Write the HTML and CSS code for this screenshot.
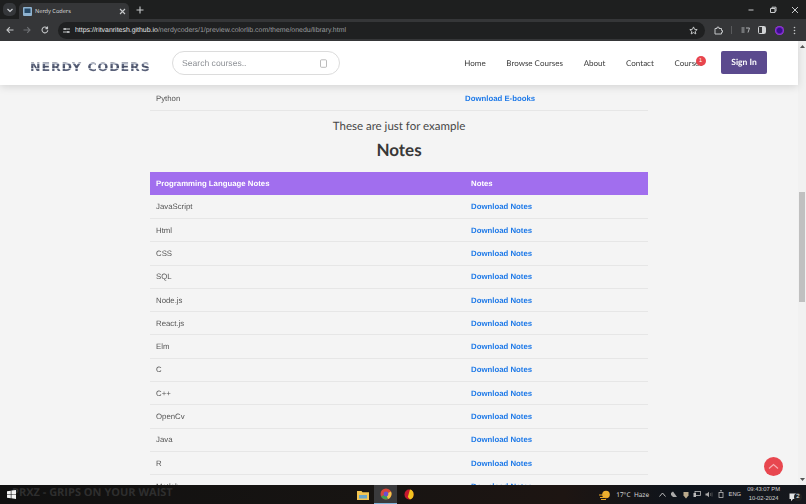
FILE: index.html
```html
<!DOCTYPE html>
<html lang="en">
<head>
<meta charset="utf-8">
<title>Nerdy Coders</title>
<link rel="stylesheet" href="styles.css">
</head>
<body>
<div class="screen">
  <div class="tabstrip">
    <div class="tab-menu"><svg width="8" height="8" viewBox="0 0 8 8"><path d="M1.500 3l2.500 2.500L6.500 3" fill="none" stroke="#cfd2d6" stroke-width="1.200"/></svg></div>
    <div class="tab">
      <svg class="favicon" width="9" height="9" viewBox="0 0 9 9"><rect width="9" height="9" rx="1" fill="#8fb3d0"/><rect x="1.500" y="1.500" width="6" height="4.500" fill="#274a68"/></svg>
      <span class="tab-title">Nerdy Coders</span>
      <svg class="tab-close" width="7" height="7" viewBox="0 0 7 7"><path d="M1 1l5 5M6 1L1 6" stroke="#c8cacc" stroke-width="1.100"/></svg>
    </div>
    <svg class="new-tab" width="8" height="8" viewBox="0 0 8 8"><path d="M4 .5v7M.5 4h7" stroke="#c8cacc" stroke-width="1.100"/></svg>
    <div class="window-controls">
      <svg width="8" height="8" viewBox="0 0 8 8"><path d="M1.500 4h5" stroke="#c8cacc"/></svg>
      <svg width="8" height="8" viewBox="0 0 8 8"><path d="M1.500 2.500h4.500v4h-4.500zM3 2.500V1.200h4v4H6" fill="none" stroke="#c8cacc"/></svg>
      <svg width="8" height="8" viewBox="0 0 8 8"><path d="M1 1l6 6M7 1L1 7" stroke="#c8cacc"/></svg>
    </div>
  </div>
  <div class="toolbar">
    <svg width="8" height="8" viewBox="0 0 8 8"><path d="M7.500 4H1M3.800 1.200L1 4l2.800 2.800" fill="none" stroke="#c4c6c8" stroke-width="1.100"/></svg>
    <svg class="nav-forward" width="8" height="8" viewBox="0 0 8 8"><path d="M.5 4H7M4.200 1.200L7 4 4.200 6.800" fill="none" stroke="#6f7174" stroke-width="1.100"/></svg>
    <svg class="nav-reload" width="8" height="8" viewBox="0 0 8 8"><path d="M6.800 4.200A2.900 2.900 0 1 1 5.900 1.800M6.500.6v2H4.500" fill="none" stroke="#c4c6c8" stroke-width="1.100"/></svg>
    <div class="omnibox">
      <span class="site-badge"><svg width="7" height="7" viewBox="0 0 7 7"><path d="M0 2h7M0 5h7" stroke="#c4c6c8"/><circle cx="2" cy="2" r="1" fill="#c4c6c8"/><circle cx="5" cy="5" r="1" fill="#c4c6c8"/></svg></span>
      <span class="url"><span class="url-host">https://ritvanritesh.github.io</span>/nerdycoders/1/preview.colorlib.com/theme/onedu/library.html</span>
      <svg class="star" width="9" height="9" viewBox="0 0 10 10"><path d="M5 1l1.200 2.700 2.900.3-2.200 1.900.7 2.900L5 7.300 2.400 8.800l.7-2.900L.9 4l2.900-.3z" fill="none" stroke="#d0d2d4"/></svg>
    </div>
    <div class="toolbar-icons">
      <svg width="9" height="9" viewBox="0 0 9 9"><path d="M1 2.500h2V1.200h2v1.300h2.500V4.500H8.500v1.800H7.500V8H1z" fill="none" stroke="#c4c6c8"/></svg>
      <span class="toolbar-sep"></span>
      <svg width="9" height="7" viewBox="0 0 9 7"><path d="M.5 1h3M.5 3h3M.5 5h3M5 1h3.500L7 5.500" fill="none" stroke="#b0b2b4"/></svg>
      <svg width="8" height="8" viewBox="0 0 8 8"><rect x=".5" y=".5" width="7" height="7" rx="1" fill="none" stroke="#d0d2d4"/><rect x="4" y="1" width="3" height="6" fill="#d0d2d4"/></svg>
      <span class="avatar"></span>
      <svg class="chrome-menu" width="3" height="9" viewBox="0 0 3 9"><circle cx="1.500" cy="1.500" r=".8" fill="#c4c6c8"/><circle cx="1.500" cy="4.500" r=".8" fill="#c4c6c8"/><circle cx="1.500" cy="7.500" r=".8" fill="#c4c6c8"/></svg>
    </div>
  </div>
  <div class="viewport">
    <header class="site-header">
      <div class="logo-box"><a class="logo">NERDY CODERS</a></div>
      <div class="search">
        <span class="search-text">Search courses..</span>
        <svg width="7" height="9" viewBox="0 0 7 9"><rect x=".5" y=".8" width="6" height="7.500" rx="1" fill="none" stroke="#aaa" stroke-width=".8"/></svg>
      </div>
      <nav class="site-nav">
        <a class="nav-link">Home</a>
        <a class="nav-link">Browse Courses</a>
        <a class="nav-link">About</a>
        <a class="nav-link">Contact</a>
        <a class="nav-link nav-courses">Courses<span class="badge">1</span></a>
      </nav>
      <a class="signin">Sign In</a>
    </header>
    <main class="content">
      <table class="table table-first">
        <tr><td class="col-a-first">Python</td><td><a class="dl">Download E-books</a></td></tr>
      </table>
      <p class="sub">These are just for example</p>
      <h2 class="title">Notes</h2>
      <table class="table">
        <tr class="head"><th class="col-a">Programming Language Notes</th><th>Notes</th></tr>
        <tr><td>JavaScript</td><td><a class="dl">Download Notes</a></td></tr>
        <tr><td>Html</td><td><a class="dl">Download Notes</a></td></tr>
        <tr><td>CSS</td><td><a class="dl">Download Notes</a></td></tr>
        <tr><td>SQL</td><td><a class="dl">Download Notes</a></td></tr>
        <tr><td>Node.js</td><td><a class="dl">Download Notes</a></td></tr>
        <tr><td>React.js</td><td><a class="dl">Download Notes</a></td></tr>
        <tr><td>Elm</td><td><a class="dl">Download Notes</a></td></tr>
        <tr><td>C</td><td><a class="dl">Download Notes</a></td></tr>
        <tr><td>C++</td><td><a class="dl">Download Notes</a></td></tr>
        <tr><td>OpenCv</td><td><a class="dl">Download Notes</a></td></tr>
        <tr><td>Java</td><td><a class="dl">Download Notes</a></td></tr>
        <tr><td>R</td><td><a class="dl">Download Notes</a></td></tr>
        <tr><td>Matlab</td><td><a class="dl">Download Notes</a></td></tr>
      </table>
    </main>
    <div class="scrollbar">
      <svg class="scroll-up" width="5" height="3" viewBox="0 0 5 3"><path d="M2.500 0L5 3H0z" fill="#555"/></svg>
      <span class="scroll-thumb"></span>
      <svg class="scroll-down" width="5" height="3" viewBox="0 0 5 3"><path d="M2.500 3L5 0H0z" fill="#555"/></svg>
    </div>
    <span class="to-top"><svg width="11" height="7" viewBox="0 0 11 7"><path d="M1 5.500l4.500-4 4.500 4" fill="none" stroke="#f7b0b4" stroke-width="1.200"/></svg></span>
  </div>
  <footer class="taskbar">
    <span class="wallpaper-text">PRXZ - GRIPS ON YOUR WAIST</span>
    <svg class="win-logo" width="9" height="9" viewBox="0 0 9 9"><path d="M0 1.300l3.800-.6v3.500H0zM4.400.6L9 0v4.200H4.400zM0 4.800h3.800v3.500L0 7.700zM4.400 4.800H9V9l-4.600-.7z" fill="#f2f2f2"/></svg>
    <div class="task-apps">
      <span class="task-app"><svg width="12" height="10" viewBox="0 0 12 10"><path d="M0 1h4.500l1 1.200H12V10H0z" fill="#f2c552"/><rect x="2" y="5" width="8" height="3.500" fill="#6aa5c8"/></svg></span>
      <span class="task-app task-app-active"><svg width="12" height="12" viewBox="0 0 12 12"><circle cx="6" cy="6" r="5.500" fill="#d8463a"/><path d="M6 6L1 8.500A5.500 5.500 0 0 0 8 11z" fill="#3f9e52"/><path d="M6 6l2 5a5.500 5.500 0 0 0 3-7.500z" fill="#f2c64a"/><circle cx="6" cy="6" r="2.400" fill="#6a4fd0"/></svg></span>
      <span class="task-app"><svg width="10" height="11" viewBox="0 0 10 11"><ellipse cx="5" cy="5.500" rx="4.500" ry="5" fill="#c4182f"/><path d="M6 .6A4.500 5 0 0 1 6 10.400L3.800 8z" fill="#f2c21f"/></svg></span>
    </div>
    <div class="tray">
      <svg width="12" height="10" viewBox="0 0 12 10"><circle cx="7" cy="4.500" r="3.800" fill="#eeb02f"/><path d="M0 5h6M1 7.500h8M2 9.500h5" stroke="#e9a627" stroke-width="1"/></svg>
      <span class="weather">17°C&nbsp; Haze</span>
      <div class="tray-icons">
        <svg width="7" height="5" viewBox="0 0 7 5"><path d="M.5 4.500l3-3.500 3 3.500" fill="none" stroke="#ccc" stroke-width=".9"/></svg>
        <svg width="8" height="7" viewBox="0 0 8 7"><path d="M1 2l2-1.500L7 6H3L1 4z" fill="#aaa"/></svg>
        <svg width="6" height="8" viewBox="0 0 6 8"><path d="M.5 1h5v3.500L3 7.500.5 4.500z" fill="#b9a98c"/></svg>
        <svg width="8" height="7" viewBox="0 0 8 7"><rect x="2" y=".5" width="5.500" height="4" fill="none" stroke="#bbb" stroke-width=".8"/><rect x=".5" y="2" width="2.500" height="4" fill="#bbb"/></svg>
        <svg width="8" height="7" viewBox="0 0 8 7"><path d="M.5 2.500h1.500L4 .8v5.400L2 4.500H.5z" fill="#aaa"/><path d="M5.500 2v3M7 1.500v4" stroke="#666" stroke-width=".7"/></svg>
        <svg width="6" height="9" viewBox="0 0 6 9"><rect x="1" y="2.500" width="4" height="5" fill="none" stroke="#bbb" stroke-width=".8"/><path d="M2 .8h2" stroke="#bbb"/></svg>
      </div>
      <span class="lang">ENG</span>
      <div class="clock"><span>09:43:07 PM</span><span>10-02-2024</span></div>
      <span class="notify"><svg width="10" height="9" viewBox="0 0 10 9"><path d="M.5.5h9v5.500H4L2 8.200V6H.5z" fill="#e4e4e4"/></svg><span class="notify-count">2</span></span>
    </div>
  </footer>
</div>
</body>
</html>
```
FILE: styles.css
```css
* { box-sizing: border-box; }
html, body { margin: 0; padding: 0; height: 100%; overflow: hidden; }
body { font-family: "Liberation Sans", Arial, sans-serif; text-rendering: geometricPrecision; }

.screen { width: 806px; height: 504px; display: flex; flex-direction: column; overflow: hidden; background: #f4f4f4; }

.tabstrip { height: 19px; flex: none; background: #1e1f1f; display: flex; align-items: flex-end; padding-left: 3px; }
.tab-menu { width: 13px; height: 13px; border-radius: 5px; background: #35373a; display: flex; align-items: center; justify-content: center; margin-bottom: 3px; }
.tab { width: 110px; height: 16px; margin-left: 3px; background: #353638; border-radius: 5px 5px 0 0; display: flex; align-items: center; padding: 0 3px 0 4px; gap: 3px; }
.favicon { flex: none; }
.tab-title { font-family: "Noto Sans", sans-serif; font-size: 5.600px; color: #d5d6d8; flex: 1; white-space: nowrap; }
.new-tab { margin: 0 0 5px 7px; }
.window-controls { margin-left: auto; height: 19px; display: flex; align-items: center; gap: 14px; padding: 0 7px 0 0; }

.toolbar { height: 22px; flex: none; background: #353638; display: flex; align-items: center; padding: 0 8px 0 6px; }
.nav-forward { margin-left: 9px; }
.nav-reload { margin-left: 10px; margin-right: 9px; }
.omnibox { width: 647px; height: 17px; border-radius: 9px; background: #1f2021; display: flex; align-items: center; padding: 0 7px 0 3px; }
.site-badge { width: 11px; height: 11px; display: flex; align-items: center; justify-content: center; margin-right: 3px; }
.url { font-size: 6.950px; color: #9a9c9f; white-space: nowrap; flex: 1; }
.url-host { color: #e3e4e6; }
.toolbar-icons { display: flex; align-items: center; margin-left: 8.500px; gap: 8.500px; }
.toolbar-sep { width: 1px; height: 8px; background: #5a5b5d; }
.avatar { width: 9px; height: 9px; border-radius: 50%; background: radial-gradient(circle, #3a0d8e 35%, #a53bf0 70%); }
.chrome-menu { margin-left: 1px; }

.viewport { flex: 1; position: relative; overflow: hidden; background: #f4f4f4; min-height: 0; }

.site-header { position: relative; z-index: 2; height: 44px; margin-right: 8px; background: #fff; box-shadow: 0 2px 8px rgba(0,0,0,.13); display: flex; align-items: center; padding: 0 31px 0 30px; }
.logo-box { width: 142px; flex: none; padding-top: 7px; }
.logo { display: block; width: max-content; font-family: "DejaVu Sans", sans-serif; font-weight: 700; font-size: 11.500px; line-height: 12px; letter-spacing: .8px; white-space: nowrap; transform: scaleX(1.1); transform-origin: left center; background: repeating-linear-gradient(180deg, #4a5168 0 2px, #b4bac8 2px 3px, #5a627a 3px 5px); -webkit-background-clip: text; background-clip: text; color: transparent; }
.search { width: 168px; height: 24px; border: 1px solid #dcdcdc; border-radius: 12px; display: flex; align-items: center; justify-content: space-between; padding: 0 12px 0 9px; }
.search-text { font-size: 8.600px; color: #8f9297; font-family: "Liberation Sans", sans-serif; }
.site-nav { margin-left: auto; display: flex; align-items: center; gap: 20.700px; }
.nav-link { font-family: Lato, sans-serif; font-size: 8px; color: #3b3b3b; white-space: nowrap; }
.nav-courses { position: relative; width: 26px; }
.badge { position: absolute; left: 21px; top: -2px; width: 10px; height: 10px; border-radius: 50%; background: #e8454d; color: #fff; font-size: 5.500px; text-align: center; line-height: 10px; font-family: "Liberation Sans", sans-serif; }
.signin { margin-left: 20.500px; margin-bottom: 2px; width: 46px; height: 23px; background: #5b4a8e; border-radius: 2px; color: #fff; font-family: Lato, sans-serif; font-weight: 700; font-size: 8.500px; display: flex; align-items: center; justify-content: center; }

.content { margin-left: 150px; width: 498px; }
.table { width: 498px; border-collapse: collapse; table-layout: fixed; font-size: 7.800px; color: #555; will-change: opacity; }
.table td, .table th { height: 23.300px; padding: 0 6px; text-align: left; border-bottom: 1px solid #e6e6e6; }
.table th { background: #a16eee; color: #fff; font-weight: 700; border-bottom: 0; }
.col-a { width: 315px; }
.table-first td { height: 25px; padding-top: 3px; }
.col-a-first { width: 309px; }
.dl { color: #1f7ae8; font-weight: 700; }
.sub { margin: 9px 0 0; text-align: center; font-family: Lato, sans-serif; font-size: 11.500px; line-height: 14px; color: #474747; }
.title { margin: 5px 0 0; text-align: center; font-family: Lato, sans-serif; font-weight: 700; font-size: 17px; line-height: 22px; color: #383838; padding-bottom: 11.400px; }

.scrollbar { position: absolute; top: 0; right: 0; bottom: 0; width: 8px; background: #f1f1f1; z-index: 1; display: flex; flex-direction: column; align-items: center; justify-content: space-between; padding: 4px 0; }
.scroll-thumb { position: absolute; top: 151px; left: 1px; width: 6px; height: 110px; background: #c0c0c0; }
.to-top { position: absolute; right: 23px; bottom: 9px; width: 19px; height: 19px; border-radius: 50%; background: #e8474f; display: flex; align-items: center; justify-content: center; z-index: 3; }

.taskbar { position: relative; height: 19px; flex: none; background: linear-gradient(90deg, #101010 0, #171412 45%, #1d1512 70%, #0e141c 85%, #17181d 100%); display: flex; align-items: center; }
.wallpaper-text { position: absolute; left: 12px; top: 0; font-family: "Open Sans", sans-serif; font-weight: 700; font-size: 11px; line-height: 15px; color: #2e2e2e; white-space: nowrap; }
.win-logo { position: relative; margin-left: 7px; }
.task-apps { position: relative; margin-left: 335px; display: flex; }
.task-app { width: 23px; height: 19px; display: flex; align-items: center; justify-content: center; }
.task-app-active { background: #3a3a3c; border-bottom: 1px solid #7fb2d8; }
.tray { margin-left: auto; display: flex; align-items: center; padding-right: 4px; }
.weather { margin-left: 5px; font-family: "Noto Sans", sans-serif; font-size: 6.500px; color: #d4d4d4; white-space: nowrap; }
.tray-icons { display: flex; align-items: center; gap: 4.300px; margin-left: 10px; }
.lang { margin-left: 5px; font-size: 5.800px; color: #d4d4d4; }
.clock { margin-left: 6px; display: flex; flex-direction: column; align-items: center; font-size: 5.800px; line-height: 9px; color: #d4d4d4; white-space: nowrap; }
.notify { position: relative; margin-left: 9px; width: 13px; height: 12px; display: block; }
.notify-count { position: absolute; right: 0; bottom: 0; width: 8px; height: 8px; border-radius: 50%; background: #222; color: #eee; font-size: 6px; line-height: 8px; text-align: center; }
```
